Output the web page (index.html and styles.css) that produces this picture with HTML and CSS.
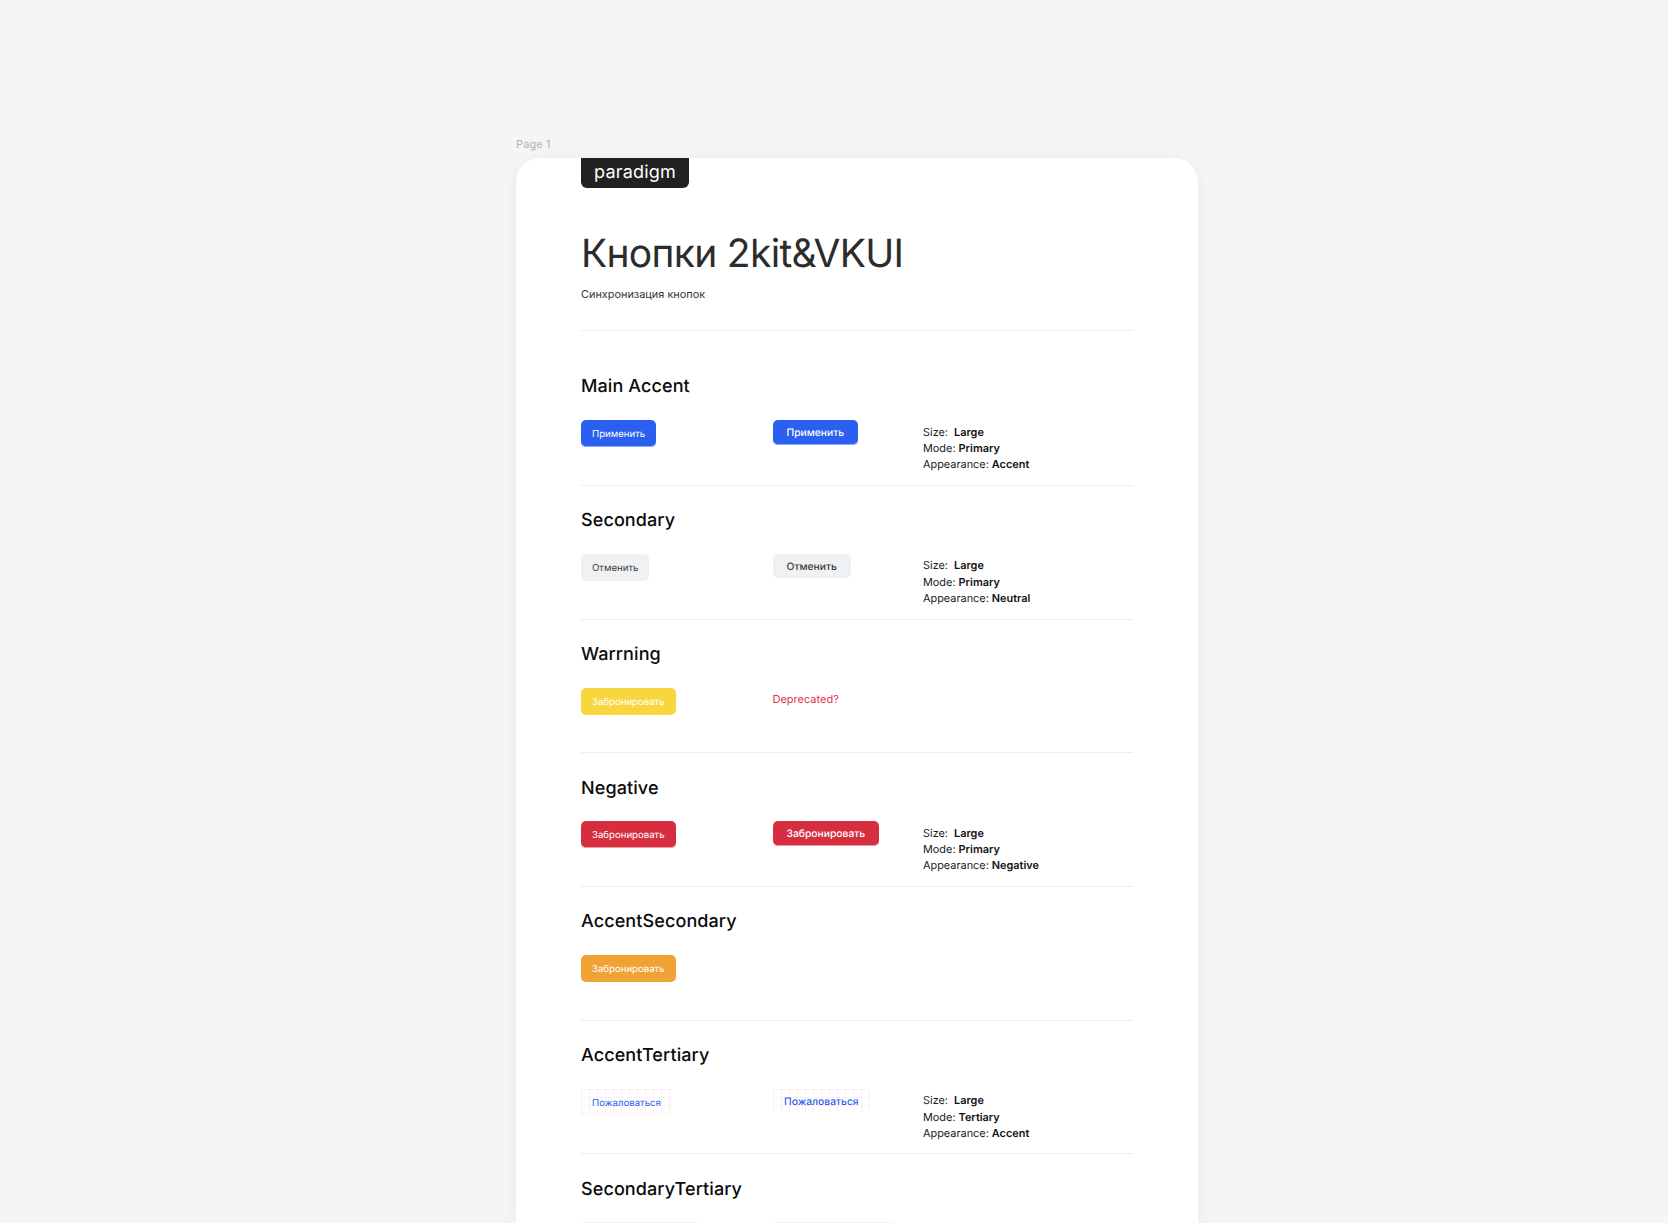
FILE: index.html
```html
<!DOCTYPE html>
<html lang="ru">
<head>
<meta charset="utf-8">
<title>Кнопки 2kit&amp;VKUI</title>
<link rel="stylesheet" href="styles.css">
</head>
<body>
<div class="page-label">Page 1</div>
<main class="card">
  <div class="logo">paradigm</div>
  <header class="head">
    <h1 class="title">Кнопки 2kit&amp;VKUI</h1>
    <p class="subtitle">Синхронизация кнопок</p>
  </header>

  <section class="section">
    <h2 class="section-title">Main Accent</h2>
    <div class="row">
      <div class="col-a"><span class="btn-a blue">Применить</span></div>
      <div class="col-b"><span class="btn-b blue">Применить</span></div>
      <div class="meta">
        <div>Size:&nbsp; <b>Large</b></div>
        <div>Mode: <b>Primary</b></div>
        <div>Appearance: <b>Accent</b></div>
      </div>
    </div>
  </section>

  <section class="section">
    <h2 class="section-title">Secondary</h2>
    <div class="row">
      <div class="col-a"><span class="btn-a gray">Отменить</span></div>
      <div class="col-b"><span class="btn-b gray">Отменить</span></div>
      <div class="meta">
        <div>Size:&nbsp; <b>Large</b></div>
        <div>Mode: <b>Primary</b></div>
        <div>Appearance: <b>Neutral</b></div>
      </div>
    </div>
  </section>

  <section class="section">
    <h2 class="section-title">Warrning</h2>
    <div class="row">
      <div class="col-a"><span class="btn-a yellow">Забронировать</span></div>
      <div class="col-b"><span class="deprecated">Deprecated?</span></div>
    </div>
  </section>

  <section class="section">
    <h2 class="section-title">Negative</h2>
    <div class="row">
      <div class="col-a"><span class="btn-a red">Забронировать</span></div>
      <div class="col-b"><span class="btn-b red">Забронировать</span></div>
      <div class="meta">
        <div>Size:&nbsp; <b>Large</b></div>
        <div>Mode: <b>Primary</b></div>
        <div>Appearance: <b>Negative</b></div>
      </div>
    </div>
  </section>

  <section class="section">
    <h2 class="section-title">AccentSecondary</h2>
    <div class="row">
      <div class="col-a"><span class="btn-a orange">Забронировать</span></div>
    </div>
  </section>

  <section class="section">
    <h2 class="section-title">AccentTertiary</h2>
    <div class="row">
      <div class="col-a"><span class="btn-a tertiary">Пожаловаться</span></div>
      <div class="col-b"><span class="btn-b tertiary">Пожаловаться</span></div>
      <div class="meta">
        <div>Size:&nbsp; <b>Large</b></div>
        <div>Mode: <b>Tertiary</b></div>
        <div>Appearance: <b>Accent</b></div>
      </div>
    </div>
  </section>

  <section class="section">
    <h2 class="section-title">SecondaryTertiary</h2>
    <div class="row">
      <div class="col-a"><span class="btn-a tertiary stub-a"></span></div>
      <div class="col-b"><span class="btn-b tertiary stub-b"></span></div>
    </div>
  </section>
</main>
</body>
</html>
```
FILE: styles.css
```css
* { box-sizing: border-box; }
html, body { margin: 0; height: 1223px; overflow: hidden; }
body {
  background: #f5f5f5;
  font-family: Inter, "Liberation Sans", sans-serif;
  text-rendering: geometricPrecision;
  padding: 137px 0 0 516px;
}
.page-label {
  font-size: 11px;
  line-height: 15px;
  height: 21px;
  color: #b3b3b3;
  letter-spacing: 0.1px;
}
.card {
  width: 682px;
  height: 1065px;
  padding: 0 65px;
  background: #fff;
  border-radius: 24px 24px 0 0;
  box-shadow: 0 2px 16px rgba(0, 0, 0, 0.05);
  overflow: hidden;
}
.logo {
  width: 108px;
  height: 30px;
  background: #212121;
  color: #fff;
  border-radius: 0 0 6px 6px;
  font-size: 18px;
  line-height: 29px;
  letter-spacing: 0.2px;
  text-align: center;
}
.head {
  height: 143px;
  padding-top: 42px;
  border-bottom: 1px solid #eeeeee;
}
.title {
  margin: 0;
  font-size: 39px;
  line-height: 48px;
  font-weight: 400;
  letter-spacing: -0.7px;
  color: #2c2c2c;
}
.subtitle {
  margin: 8px 0 0;
  font-size: 10.9px;
  line-height: 16px;
  color: #333;
}
.section {
  height: 133.7px;
  padding-top: 24.2px;
  border-bottom: 1px solid #eeeeee;
}
.head + .section { margin-top: 21.3px; }
.section-title {
  margin: 0 0 21.8px;
  font-size: 18px;
  line-height: 22px;
  font-weight: 500;
  letter-spacing: 0.1px;
  color: #0b0b0b;
}
.row {
  display: grid;
  grid-template-columns: 191.5px 150.5px 1fr;
  align-items: start;
}
.btn-a, .btn-b {
  display: block;
  width: fit-content;
  border-radius: 5px;
  white-space: nowrap;
}
.btn-a {
  height: 27px;
  padding: 0 11px;
  font-size: 9.65px;
  line-height: 29px;
}
.btn-b {
  height: 24.5px;
  padding: 0 14px;
  font-size: 10.3px;
  line-height: 26.5px;
  font-weight: 500;
}
.blue { background: #2b5ff0; color: #fff; box-shadow: inset 0 -1px 0 #8fadf6; }
.gray { background: #f0f1f3; color: #3a3a3a; }
.yellow { background: #f8d640; color: #fff; }
.red { background: #d62e3f; color: #fff; box-shadow: inset 0 -1px 0 #ec9aa3; }
.orange { background: #f0a335; color: #fff; }
.tertiary {
  color: #2b5ff0;
  border-radius: 0;
  background-image:
    repeating-linear-gradient(to right, #fdf0f0 0 1px, transparent 1px 8px),
    repeating-linear-gradient(to bottom, #fdf0f0 0 1px, transparent 1px 8px);
}
.btn-b.tertiary { padding: 0 11.5px; }
.stub-a { width: 118px; }
.stub-b { width: 121px; }
.deprecated {
  display: block;
  padding-top: 3px;
  font-size: 11px;
  line-height: 16px;
  color: #dc3349;
}
.meta {
  padding-top: 3.5px;
  font-size: 10.9px;
  line-height: 16.3px;
  color: #1a1a1a;
}
.meta b { font-weight: 600; color: #111; }
```
